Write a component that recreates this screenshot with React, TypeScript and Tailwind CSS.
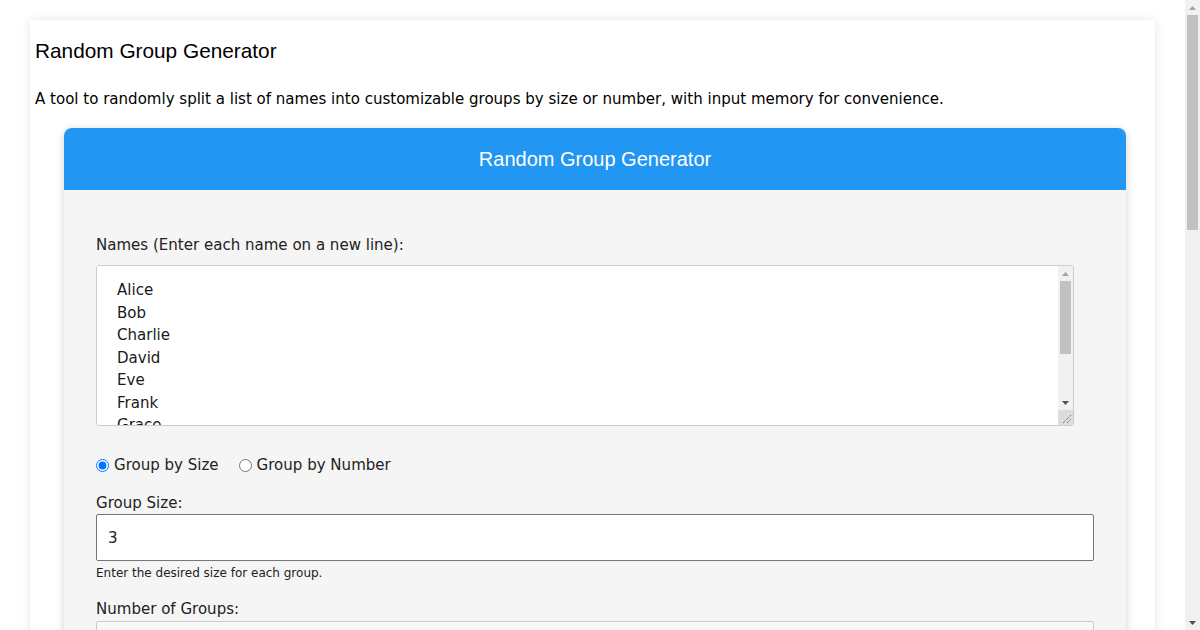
import React, { useState } from 'react';

const names = ['Alice', 'Bob', 'Charlie', 'David', 'Eve', 'Frank', 'Grace', 'Heidi', 'Ivan', 'Judy', 'Mallory', 'Niaj'];

function ScrollArrow({ dir, dark }: { dir: 'up' | 'down'; dark?: boolean }) {
  return (
    <div className="flex h-[15px] shrink-0 items-center justify-center">
      <svg width="7" height="4" viewBox="0 0 7 4">
        {dir === 'up' ? (
          <path d="M0 4 L3.5 0 L7 4 Z" fill={dark ? '#505050' : '#a3a3a3'} />
        ) : (
          <path d="M0 0 L7 0 L3.5 4 Z" fill={dark ? '#505050' : '#a3a3a3'} />
        )}
      </svg>
    </div>
  );
}

export default function App() {
  const [mode, setMode] = useState<'size' | 'number'>('size');

  return (
    <div className="flex h-[630px] overflow-hidden bg-white font-['DejaVu_Sans',sans-serif] text-[#222]">
      <div className="min-w-0 flex-1 pt-5">
        <div className="mx-[30px] bg-white px-[5px] pb-10 shadow-[0_0_10px_rgba(0,0,0,0.1)]">
          <h2 className="pt-[18px] font-['Liberation_Sans',Arial,sans-serif] text-[20.8px] leading-[26px] text-black">
            Random Group Generator
          </h2>
          <p className="mt-[26px] text-[15.04px] leading-[18px] text-black">
            A tool to randomly split a list of names into customizable groups by size or number, with input memory for convenience.
          </p>

          <div className="mt-5 ml-[29px] w-[1062px] overflow-hidden rounded-lg bg-[#f5f5f5] shadow-[0_2px_8px_rgba(0,0,0,0.18)]">
            <div className="flex h-[62px] items-center justify-center bg-[#2196f3] font-['Liberation_Sans',Arial,sans-serif] text-xl text-white">
              Random Group Generator
            </div>

            <div className="flex flex-col px-8 pt-[46px] pb-10">
              <label className="text-[15.04px] leading-[18px]">Names (Enter each name on a new line):</label>
              <div className="mt-[11px] flex h-[161px] w-[978px] overflow-hidden rounded-[3px] border border-[#ccc] bg-white">
                <textarea
                  className="min-w-0 flex-1 resize-none overflow-hidden bg-white px-5 pt-[13px] pb-3 font-['DejaVu_Sans',sans-serif] text-[15.04px] leading-[22.5px] text-[#1a1a1a] outline-none"
                  defaultValue={names.join('\n')}
                />
                <div className="flex w-[15px] shrink-0 flex-col bg-[#f1f1f1]">
                  <ScrollArrow dir="up" />
                  <div className="mx-[2px] h-[73px] bg-[#c1c1c1]" />
                  <div className="flex-1" />
                  <ScrollArrow dir="down" dark />
                  <div className="flex h-[15px] items-end justify-end bg-[#dcdcdc] p-[2px]">
                    <svg width="9" height="9" viewBox="0 0 9 9">
                      <path d="M1 9 L9 1 M5 9 L9 5" stroke="#555" strokeWidth="1" strokeDasharray="1 1" />
                    </svg>
                  </div>
                </div>
              </div>

              <div className="mt-[30px] flex items-center text-[15.04px] leading-[18px]">
                <label className="flex items-center gap-[5px]">
                  <input
                    type="radio"
                    name="mode"
                    checked={mode === 'size'}
                    onChange={() => setMode('size')}
                    className="h-[13px] w-[13px]"
                  />
                  Group by Size
                </label>
                <label className="ml-5 flex items-center gap-[5px]">
                  <input
                    type="radio"
                    name="mode"
                    checked={mode === 'number'}
                    onChange={() => setMode('number')}
                    className="h-[13px] w-[13px]"
                  />
                  Group by Number
                </label>
              </div>

              <label className="mt-5 text-[15.04px] leading-[18px]">Group Size:</label>
              <input
                type="number"
                defaultValue={3}
                disabled={mode !== 'size'}
                className="mt-[2px] h-[47px] w-[998px] shrink-0 rounded-[2px] border border-[#767676] bg-white px-[11px] text-[15.04px] text-[#222] outline-none"
              />
              <small className="mt-[5px] text-xs leading-[14px] text-[#222]">Enter the desired size for each group.</small>

              <label className="mt-5 text-[15.04px] leading-[18px]">Number of Groups:</label>
              <input
                type="number"
                placeholder="e.g., 4"
                disabled={mode !== 'number'}
                className="mt-[3px] h-[47px] w-[998px] shrink-0 rounded-[2px] border border-[#ccc] bg-[#f8f8f8] px-[11px] text-[15.04px] text-[#222] outline-none"
              />
              <small className="mt-[5px] text-xs leading-[14px] text-[#222]">Enter the desired number of groups.</small>

              <button className="mt-6 h-[44px] w-[998px] shrink-0 rounded bg-[#2196f3] text-[15.04px] text-white">Generate Groups</button>
            </div>
          </div>
        </div>
      </div>

      <div className="flex w-[15px] shrink-0 flex-col bg-[#f1f1f1]">
        <ScrollArrow dir="up" />
        <div className="mx-[2px] h-[215px] bg-[#c1c1c1]" />
        <div className="flex-1" />
        <ScrollArrow dir="down" dark />
      </div>
    </div>
  );
}
